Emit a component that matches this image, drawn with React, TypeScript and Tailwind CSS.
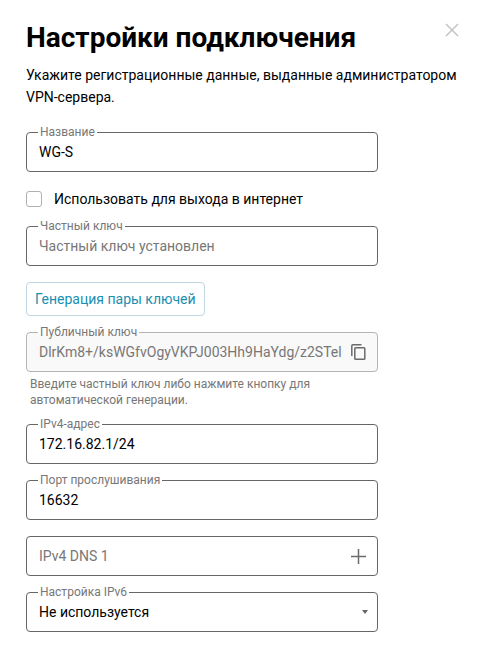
import { useState } from "react";
import type { ReactNode } from "react";

const inputCls =
  "h-10 w-full rounded border px-3 text-sm focus:outline-none placeholder:text-[#777] placeholder:opacity-100";

type FieldProps = {
  id: string;
  label: string;
  children: ReactNode;
};

function Field({ id, label, children }: FieldProps) {
  return (
    <div className="relative">
      {children}
      <label
        htmlFor={id}
        className="absolute -top-2 left-3 bg-linear-to-b from-white from-60% to-transparent to-60% px-0.5 text-xs leading-4 text-[#777]"
      >
        {label}
      </label>
    </div>
  );
}

function CloseIcon() {
  return (
    <svg width="14" height="14" viewBox="0 0 14 14" fill="none" stroke="#c4c4c4" strokeWidth="1.5">
      <path d="M1 1l12 12M13 1L1 13" />
    </svg>
  );
}

function CopyIcon() {
  return (
    <svg width="15" height="16" viewBox="0 0 15 16" fill="none" stroke="#6b6b6b" strokeWidth="1.5">
      <path d="M0.8 12V1.8q0-1 1-1H10.5" />
      <rect x="3.8" y="3.8" width="10" height="11.4" rx="0.8" />
    </svg>
  );
}

function PlusIcon() {
  return (
    <svg width="15" height="15" viewBox="0 0 15 15" fill="none" stroke="#6b6b6b" strokeWidth="1.5">
      <path d="M7.5 0v15M0 7.5h15" />
    </svg>
  );
}

export default function App() {
  const [name, setName] = useState("WG-S");
  const [useForInternet, setUseForInternet] = useState(false);
  const [privateKey, setPrivateKey] = useState("");
  const [address, setAddress] = useState("172.16.82.1/24");
  const [port, setPort] = useState("16632");
  const [dns, setDns] = useState("");
  const [ipv6, setIpv6] = useState("off");

  return (
    <main className="bg-white px-6 pt-5 pb-5 font-['Roboto',sans-serif] text-sm text-black">
      <header className="flex items-start justify-between pl-0.5">
        <h1 className="text-[28px] leading-9 font-bold">Настройки подключения</h1>
        <button type="button" aria-label="Закрыть" className="-mr-1 -mt-px p-1">
          <CloseIcon />
        </button>
      </header>
      <p className="mt-2 px-0.5 text-sm leading-[22px]">
        Укажите регистрационные данные, выданные администратором VPN-сервера.
      </p>

      <form className="mx-0.5 mt-6 max-w-88 space-y-4" onSubmit={(e) => e.preventDefault()}>
        <Field id="name" label="Название">
          <input
            id="name"
            value={name}
            onChange={(e) => setName(e.target.value)}
            className={`${inputCls} border-[#666]`}
          />
        </Field>

        <label className="flex h-[22px] items-center gap-3 text-sm">
          <input
            type="checkbox"
            checked={useForInternet}
            onChange={(e) => setUseForInternet(e.target.checked)}
            className="size-4 appearance-none rounded-[3px] border border-[#b0b0b0] bg-white checked:bg-[#1a8fb0]"
          />
          Использовать для выхода в интернет
        </label>

        <Field id="private-key" label="Частный ключ">
          <input
            id="private-key"
            value={privateKey}
            onChange={(e) => setPrivateKey(e.target.value)}
            placeholder="Частный ключ установлен"
            className={`${inputCls} border-[#666]`}
          />
        </Field>

        <button
          type="button"
          className="block h-[34px] rounded border border-[#c0d6e2] px-2 text-sm text-[#1a8fb0]"
        >
          Генерация пары ключей
        </button>

        <div>
          <Field id="public-key" label="Публичный ключ">
            <input
              id="public-key"
              readOnly
              value="DlrKm8+/ksWGfvOgyVKPJ003Hh9HaYdg/z2STel"
              className={`${inputCls} border-[#b4b4b4] bg-[#f9f9f9] pr-8 text-[#777]`}
            />
            <button
              type="button"
              aria-label="Копировать"
              className="absolute inset-y-0 right-2 flex items-center px-1"
            >
              <CopyIcon />
            </button>
          </Field>
          <p className="mt-1 max-w-80 px-1 text-xs leading-4 text-[#777]">
            Введите частный ключ либо нажмите кнопку для автоматической генерации.
          </p>
        </div>

        <Field id="address" label="IPv4-адрес">
          <input
            id="address"
            value={address}
            onChange={(e) => setAddress(e.target.value)}
            className={`${inputCls} border-[#666]`}
          />
        </Field>

        <Field id="port" label="Порт прослушивания">
          <input
            id="port"
            value={port}
            onChange={(e) => setPort(e.target.value)}
            className={`${inputCls} border-[#666]`}
          />
        </Field>

        <div className="relative">
          <input
            aria-label="IPv4 DNS 1"
            value={dns}
            onChange={(e) => setDns(e.target.value)}
            placeholder="IPv4 DNS 1"
            className={`${inputCls} border-[#666]`}
          />
          <button
            type="button"
            aria-label="Добавить DNS"
            className="absolute inset-y-0 right-2 flex items-center px-1"
          >
            <PlusIcon />
          </button>
        </div>

        <Field id="ipv6" label="Настройка IPv6">
          <select
            id="ipv6"
            value={ipv6}
            onChange={(e) => setIpv6(e.target.value)}
            className={`${inputCls} appearance-none border-[#666] bg-white`}
          >
            <option value="off">Не используется</option>
            <option value="auto">Автоматически</option>
            <option value="manual">Вручную</option>
          </select>
          <svg
            width="6"
            height="4"
            viewBox="0 0 6 4"
            className="pointer-events-none absolute inset-y-0 right-2.5 my-auto"
          >
            <path d="M0 0h6L3 4z" fill="#666" />
          </svg>
        </Field>
      </form>
    </main>
  );
}
